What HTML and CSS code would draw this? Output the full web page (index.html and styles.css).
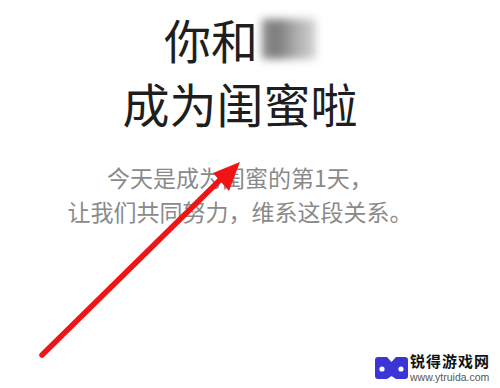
FILE: index.html
```html
<!DOCTYPE html>
<html lang="zh-CN">
<head>
<meta charset="utf-8">
<link rel="stylesheet" href="styles.css">
</head>
<body>
<main class="page">
  <h1 class="title">
    <span class="title-line">你和<span class="blurred"></span></span>
    <span class="title-line">成为闺蜜啦</span>
  </h1>
  <p class="desc">今天是成为闺蜜的第1天，<br>让我们共同努力，维系这段关系。</p>
</main>
<svg class="arrow" width="500" height="388" viewBox="0 0 500 388">
  <line x1="42" y1="355" x2="224" y2="176" stroke="#f01414" stroke-width="5.5" stroke-linecap="round"/>
  <polygon points="240,162 213,173 229,191" fill="#f01414"/>
</svg>
<div class="watermark">
  <svg class="logo" width="33" height="22" viewBox="0 0 33 22">
    <path d="M3 0 H12 L16.5 5 L21 0 H30 Q33 0 33 3 V19 Q33 22 30 22 H21 L16.5 19 L12 22 H3 Q0 22 0 19 V3 Q0 0 3 0 Z" fill="#3a35d4"/>
    <circle cx="7" cy="12" r="2.6" fill="#fff"/>
    <circle cx="26" cy="12" r="2.6" fill="#fff"/>
  </svg>
  <div class="wm-text">
    <span class="wm-name">锐得游戏网</span>
    <span class="wm-url">www.ytruida.com</span>
  </div>
</div>
</body>
</html>
```

FILE: styles.css
```css
html, body {
  margin: 0;
  padding: 0;
  background: #ffffff;
}
body {
  width: 500px;
  height: 388px;
  overflow: hidden;
  position: relative;
  font-family: "Noto Sans CJK SC", "Noto Sans", sans-serif;
}
.page {
  display: flex;
  flex-direction: column;
  align-items: center;
  padding: 7px 20px 0 0;
}
.title {
  margin: 0;
  display: flex;
  flex-direction: column;
  align-items: center;
  font-size: 47px;
  font-weight: 400;
  line-height: 64px;
  color: #1e1e1e;
}
.title-line {
  display: flex;
  align-items: center;
}
.blurred {
  display: inline-block;
  width: 54px;
  height: 40px;
  margin-left: 4px;
  background: linear-gradient(90deg, #8c8c8c 0%, #7d7d7d 30%, #a9a9a9 60%, #d4d4d4 100%);
  filter: blur(4px);
}
.desc {
  margin: 25px 0 0;
  font-size: 23px;
  line-height: 34px;
  color: #8a8a8a;
  text-align: center;
}
.arrow {
  position: absolute;
  left: 0;
  top: 0;
}
.watermark {
  position: absolute;
  left: 375px;
  top: 353px;
  display: flex;
  align-items: center;
  gap: 2px;
}
.logo {
  display: block;
}
.wm-text {
  display: flex;
  flex-direction: column;
  gap: 4px;
}
.wm-name {
  font-size: 15px;
  font-weight: 700;
  line-height: 15px;
  color: #111;
  letter-spacing: 1px;
}
.wm-url {
  font-family: "Liberation Sans", Arial, sans-serif;
  font-size: 10.5px;
  line-height: 11px;
  color: #555;
}
```
